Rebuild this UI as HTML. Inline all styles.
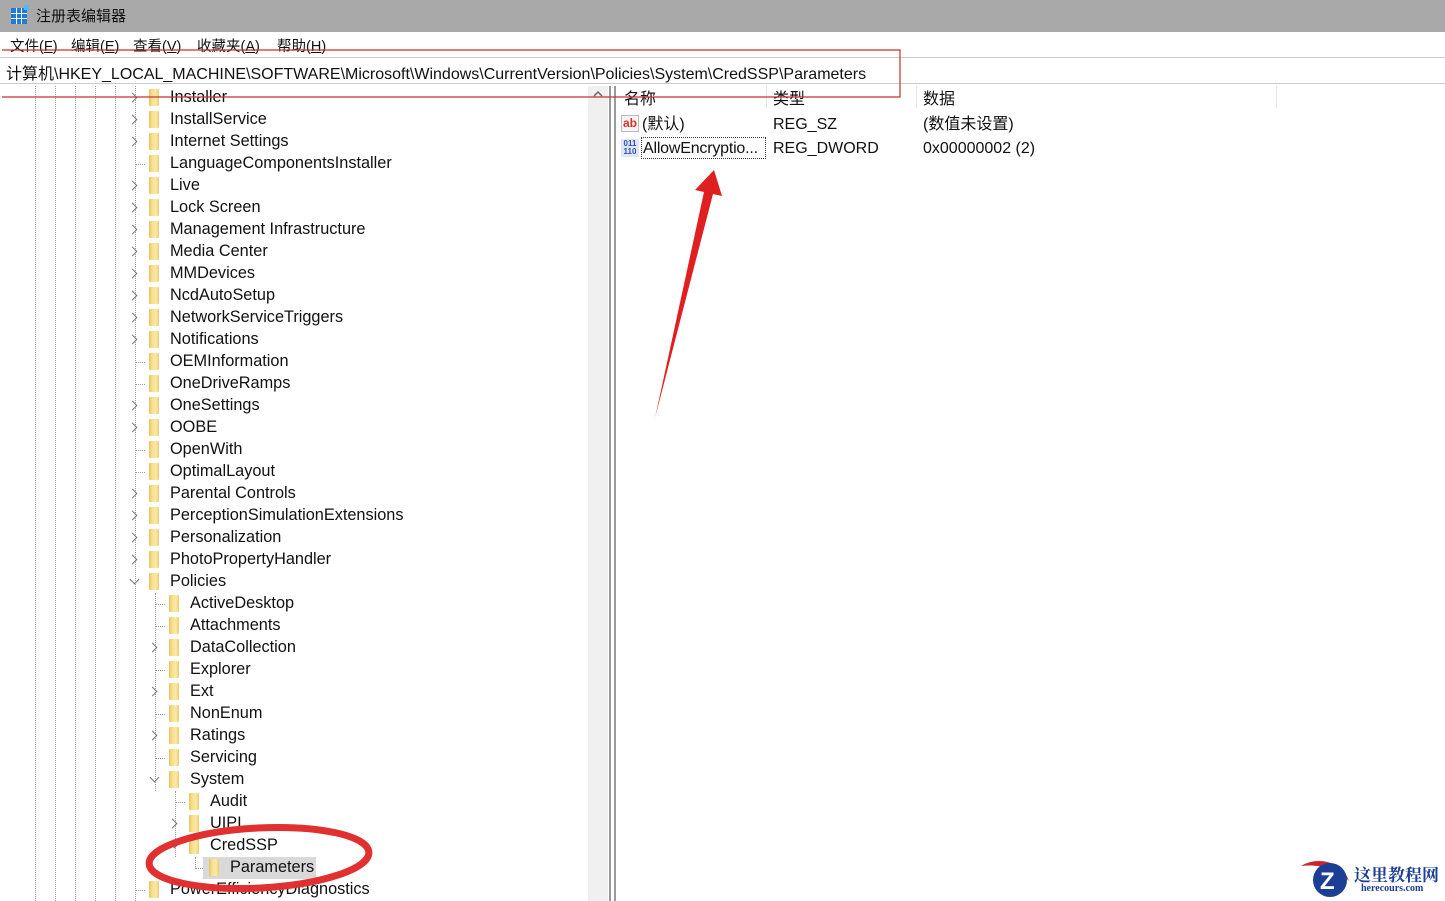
<!DOCTYPE html>
<html><head><meta charset="utf-8">
<style>
*{margin:0;padding:0;box-sizing:border-box}
body{width:1445px;height:901px;overflow:hidden;background:#fff;font-family:"Liberation Sans","Noto Sans CJK SC",sans-serif;font-size:16px;color:#111;position:relative}
.abs{position:absolute}
.rp{position:absolute;height:22px;line-height:22px;white-space:nowrap}
.title{left:0;top:0;width:1445px;height:32px;background:#a9a9a9}
.menu{left:0;top:32px;width:1445px;height:24px;background:#fff}
.row{position:absolute;height:22px;line-height:22px;white-space:nowrap;font-size:16.3px}
.fold{position:absolute;width:10px;height:17px;background:linear-gradient(90deg,#e6c25a,#f8df8c 30%,#fbe9a8 70%,#eccc6a);border-radius:1px}
.arr{position:absolute;width:7px;height:7px;border-right:1.5px solid #777;border-bottom:1.5px solid #777}
.vl{position:absolute;width:0;border-left:1px dotted #999}
.hl{position:absolute;height:0;border-top:1px dotted #999;width:10px}
.mi{position:absolute;top:35px;font-size:14.5px}
</style></head><body>
<div class="abs title"></div>
<svg class="abs" style="left:10px;top:5px" width="20" height="20" viewBox="0 0 20 20"><rect x="1" y="3" width="16" height="16" fill="#1e7bd8"/><g stroke="#fff" stroke-width="1"><line x1="1" y1="8.5" x2="17" y2="8.5"/><line x1="1" y1="13.5" x2="17" y2="13.5"/><line x1="6.5" y1="3" x2="6.5" y2="19"/><line x1="11.5" y1="3" x2="11.5" y2="19"/></g><rect x="14" y="0" width="5" height="5" fill="#5bb5f5"/></svg>
<div class="abs" style="left:36px;top:5px;font-size:15px;color:#111">注册表编辑器</div>
<div class="abs menu"></div>
<div class="mi" style="left:10px">文件(<u>F</u>)</div>
<div class="mi" style="left:71px">编辑(<u>E</u>)</div>
<div class="mi" style="left:133px">查看(<u>V</u>)</div>
<div class="mi" style="left:197px">收藏夹(<u>A</u>)</div>
<div class="mi" style="left:277px">帮助(<u>H</u>)</div>
<div class="abs" style="left:0;top:57px;width:1445px;height:27px;border-top:1px solid #ccc;border-bottom:1px solid #ccc"></div>
<div class="abs" style="left:6px;top:60px;font-size:16px">计算机\HKEY_LOCAL_MACHINE\SOFTWARE\Microsoft\Windows\CurrentVersion\Policies\System\CredSSP\Parameters</div>
<div class="vl" style="left:35px;top:86px;height:815px"></div>
<div class="vl" style="left:55px;top:86px;height:815px"></div>
<div class="vl" style="left:75px;top:86px;height:815px"></div>
<div class="vl" style="left:95px;top:86px;height:815px"></div>
<div class="vl" style="left:115px;top:86px;height:815px"></div>
<div class="vl" style="left:135px;top:86px;height:815px"></div>
<div class="vl" style="left:155px;top:593px;height:198px"></div>
<div class="vl" style="left:175px;top:791px;height:66px"></div>
<div class="vl" style="left:195px;top:857px;height:12px"></div>
<div class="abs" style="left:588px;top:86px;width:20px;height:815px;background:#f0f0f0"></div>
<svg class="abs" style="left:591px;top:89px" width="14" height="10"><polyline points="3,7 7,3 11,7" fill="none" stroke="#666" stroke-width="1.5"/></svg>
<div class="abs" style="left:609px;top:86px;width:2px;height:815px;background:#9a9a9a"></div>
<div class="abs" style="left:614px;top:86px;width:2px;height:815px;background:#9a9a9a"></div>
<div id="tree"></div>
<div class="abs" style="left:766px;top:86px;width:1px;height:22px;background:#e5e5e5"></div>
<div class="abs" style="left:916px;top:86px;width:1px;height:22px;background:#e5e5e5"></div>
<div class="abs" style="left:1276px;top:86px;width:1px;height:22px;background:#e5e5e5"></div>
<div class="rp" style="left:624px;top:89px">名称</div>
<div class="rp" style="left:773px;top:89px">类型</div>
<div class="rp" style="left:923px;top:89px">数据</div>
<div class="abs" style="left:621px;top:115px;width:18px;height:17px;border:1px solid #bbb;background:#f4f4f4;color:#d9342b;font-weight:bold;font-size:12px;line-height:14px;text-align:center">ab</div>
<div class="rp" style="left:642px;top:114px">(默认)</div>
<div class="rp" style="left:773px;top:114px">REG_SZ</div>
<div class="rp" style="left:923px;top:114px">(数值未设置)</div>
<div class="abs" style="left:621px;top:139px;width:18px;height:18px;background:#dfe6f5;color:#2a4fb0;font-weight:bold;font-size:8px;line-height:8px;text-align:center;padding-top:1px">011<br>110</div>
<div class="abs" style="left:641px;top:137px;width:125px;height:22px;border:1px dotted #333"></div>
<div class="rp" style="left:643px;top:138px;letter-spacing:-0.2px">AllowEncryptio...</div>
<div class="rp" style="left:773px;top:138px">REG_DWORD</div>
<div class="rp" style="left:923px;top:138px">0x00000002 (2)</div>
<svg class="abs" style="left:0;top:0" width="1445" height="901">
<polyline points="2,50 900,50 900,97 2,97" fill="none" stroke="#c9302c" stroke-width="1.2"/>
<ellipse cx="259" cy="858" rx="110" ry="30" fill="none" stroke="#e03030" stroke-width="7" transform="rotate(-3 259 858)"/>
<polygon points="655,418 704,192 695,190 714,170 722,196 713,194" fill="#e02020"/>
</svg>
<svg class="abs" style="left:1297px;top:856px" width="60" height="45"><path d="M4 10 C20 0,45 5,52 25 C40 12,20 8,4 10Z" fill="#c8252c"/><circle cx="33" cy="24" r="17" fill="#1c3f95"/><text x="23" y="33" font-size="24" font-weight="bold" fill="#fff" font-family="Liberation Sans">Z</text></svg>
<div class="abs" style="left:1354px;top:861px;font-size:17px;font-weight:bold;color:#1c3f95;font-family:'Liberation Serif','Noto Serif CJK SC',serif">这里教程网</div>
<div class="abs" style="left:1361px;top:883px;font-size:10px;font-weight:bold;color:#1c3f95;font-family:'Liberation Serif',serif">herecours.com</div>
<script>
var items=[
["Installer",0,">"],["InstallService",0,">"],["Internet Settings",0,">"],["LanguageComponentsInstaller",0,""],["Live",0,">"],["Lock Screen",0,">"],["Management Infrastructure",0,">"],["Media Center",0,">"],["MMDevices",0,">"],["NcdAutoSetup",0,">"],["NetworkServiceTriggers",0,">"],["Notifications",0,">"],["OEMInformation",0,""],["OneDriveRamps",0,""],["OneSettings",0,">"],["OOBE",0,">"],["OpenWith",0,""],["OptimalLayout",0,""],["Parental Controls",0,">"],["PerceptionSimulationExtensions",0,">"],["Personalization",0,">"],["PhotoPropertyHandler",0,">"],["Policies",0,"v"],
["ActiveDesktop",1,""],["Attachments",1,""],["DataCollection",1,">"],["Explorer",1,""],["Ext",1,">"],["NonEnum",1,""],["Ratings",1,">"],["Servicing",1,""],["System",1,"v"],
["Audit",2,""],["UIPI",2,">"],["CredSSP",2,"v"],["Parameters",3,""],["PowerEfficiencyDiagnostics",0,""]];
var h="";
items.forEach(function(it,i){
 var cy=98+22*i, x=135+20*it[1];
 if(it[2]==">") h+='<div class="arr" style="left:'+(x-6)+'px;top:'+(cy-4)+'px;transform:rotate(-45deg)"></div>';
 else if(it[2]=="v") h+='<div class="arr" style="left:'+(x-4)+'px;top:'+(cy-6)+'px;transform:rotate(45deg)"></div>';
 else h+='<div class="hl" style="left:'+x+'px;top:'+cy+'px"></div>';
 if(it[0]=="Parameters") h+='<div class="abs" style="left:'+(x+8)+'px;top:'+(cy-11)+'px;width:113px;height:22px;background:#d9d9d9"></div>';
 h+='<div class="fold" style="left:'+(x+14)+'px;top:'+(cy-9)+'px"></div>';
 h+='<div class="row" style="left:'+(x+35)+'px;top:'+(cy-12)+'px">'+it[0]+'</div>';
});
document.getElementById("tree").innerHTML=h;
</script>
</body></html>
